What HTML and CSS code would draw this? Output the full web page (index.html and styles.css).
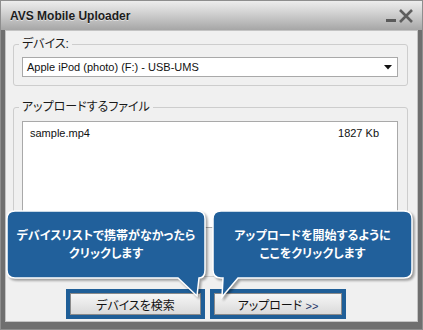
FILE: index.html
```html
<!DOCTYPE html>
<html>

<head>
    <title>AVS Mobile Uploader</title>
    <link rel="stylesheet" href="styles.css">
</head>

<body>
    <div class="window">
        <!-- Title bar -->
        <div class="titlebar">
            <span class="title">AVS Mobile Uploader</span>
            <div class="controls">
                <svg class="btn-min" width="12" height="16" viewBox="0 0 12 16">
                    <rect x="1" y="11" width="10" height="3" fill="#5a5a5a"/>
                </svg>
                <svg class="btn-close" width="16" height="16" viewBox="0 0 16 16">
                    <path d="M2 2 L14 14 M14 2 L2 14" stroke="#5e5e5e" stroke-width="2.6" fill="none"/>
                </svg>
            </div>
        </div>

        <div class="frame">
            <div class="content">
                <!-- Device group -->
                <fieldset class="group group-device">
                    <legend>デバイス:</legend>
                    <div class="combo">
                        <span>Apple iPod (photo) (F:) - USB-UMS</span>
                        <svg width="8" height="5" viewBox="0 0 8 5"><path d="M0 0 H8 L4 4.5 Z" fill="#111"/></svg>
                    </div>
                </fieldset>

                <!-- Files group -->
                <fieldset class="group group-files">
                    <legend>アップロードするファイル</legend>
                    <div class="filelist">
                        <div class="file-row">
                            <span>sample.mp4</span>
                            <span>1827 Kb</span>
                        </div>
                    </div>
                </fieldset>

                <!-- Buttons -->
                <div class="actions">
                    <div class="highlight highlight-search">
                        <button class="btn">デバイスを検索</button>
                    </div>
                    <div class="highlight highlight-upload">
                        <button class="btn">アップロード <span class="arrows">&gt;&gt;</span></button>
                    </div>
                </div>
            </div>
        </div>

        <!-- Tutorial callouts -->
        <div class="callout callout-left">
            <svg class="callout-shape" width="198" height="87" viewBox="0 0 198 87">
                <path d="M8 0 H190 Q198 0 198 8 V59 Q198 67 192 67 L190 85 L171 67 H8 Q0 67 0 59 V8 Q0 0 8 0 Z"/>
            </svg>
            <p class="callout-text">デバイスリストで携帯がなかったら<br>クリックします</p>
        </div>
        <div class="callout callout-right">
            <svg class="callout-shape" width="199" height="87" viewBox="0 0 199 87">
                <path d="M8 0 H191 Q199 0 199 8 V59 Q199 67 191 67 H25 L9 86 L10 67 H8 Q0 67 0 59 V8 Q0 0 8 0 Z"/>
            </svg>
            <p class="callout-text">アップロードを開始するように<br>ここをクリックします</p>
        </div>
    </div>
</body>

</html>
```

FILE: styles.css
```css
body {
    margin: 0;
    padding: 0;
    background-color: #ffffff;
    font-family: "Liberation Sans", "Noto Sans CJK JP", sans-serif;
    font-size: 11px;
    color: #111;
}

.window {
    position: relative;
    width: 421px;
    height: 328px;
    border: 1px solid #8e8e8e;
    background-color: #6f6f6f;
}

.titlebar {
    display: flex;
    justify-content: space-between;
    align-items: center;
    height: 29px;
    padding: 0 8px 0 9px;
    background: linear-gradient(#ededed, #cfcfcf 45%, #a6a6a6);
}

.title {
    font-size: 12px;
    font-weight: bold;
    color: #1c1c1c;
    text-shadow: 0 1px 0 rgba(255, 255, 255, 0.5);
    padding-top: 1px;
}

.controls {
    display: flex;
    align-items: center;
    gap: 1px;
}

.frame {
    padding: 0 4px 7px 4px;
}

.content {
    height: 290px;
    border: 1px solid #c4c4c4;
    background-color: #f0f0f0;
    display: flex;
    flex-direction: column;
}

.group {
    margin: 5px 9px 0 7px;
    padding: 5px 9px 8px 8px;
    border: 1px solid #cdcdcd;
    border-radius: 3px;
    min-width: 0;
}

.group legend {
    margin-left: -3px;
    padding: 0 3px;
    line-height: 16px;
    font-size: 12px;
    font-feature-settings: "palt";
    color: #1a1a1a;
}

.group-files {
    margin-top: 13px;
    padding-top: 6px;
    padding-bottom: 48px;
}

.combo {
    display: flex;
    justify-content: space-between;
    align-items: center;
    height: 18px;
    padding: 0 5px 0 4px;
    border: 1px solid #a9a9a9;
    background-color: #fff;
}

.filelist {
    height: 105px;
    border: 1px solid #a9a9a9;
    background-color: #fff;
}

.file-row {
    display: flex;
    justify-content: space-between;
    margin-top: 3px;
    padding: 0 18px 0 7px;
    line-height: 16px;
}

.actions {
    display: flex;
    gap: 5px;
    margin-top: 12px;
    padding-left: 60px;
}

.highlight {
    border: 4px solid #1f5e97;
    height: 22px;
}

.highlight-search {
    width: 131px;
}

.highlight-upload {
    width: 128px;
}

.btn {
    width: 100%;
    height: 22px;
    border: 1px solid #8a8a8a;
    background: linear-gradient(#f6f6f6, #e8e8e8 50%, #dadada);
    font-family: "Liberation Sans", "Noto Sans CJK JP", sans-serif;
    font-size: 12px;
    font-feature-settings: "palt";
    color: #111;
    padding: 0;
}

.arrows {
    color: #223366;
    font-size: 11px;
}

.callout {
    position: absolute;
    top: 210px;
    height: 67px;
}

.callout-left {
    left: 6px;
    width: 198px;
}

.callout-right {
    left: 212px;
    width: 199px;
}

.callout-shape {
    position: absolute;
    left: 0;
    top: 0;
    overflow: visible;
    filter: drop-shadow(2px 2px 1px rgba(0, 0, 0, 0.35));
}

.callout-shape path {
    fill: #21609b;
    stroke: #ffffff;
    stroke-width: 1.5;
}

.callout-text {
    position: relative;
    margin: 0;
    padding-top: 15px;
    text-align: center;
    color: #fff;
    font-family: "Noto Sans CJK JP", sans-serif;
    font-size: 12px;
    font-weight: bold;
    line-height: 18px;
    font-feature-settings: "palt";
}
```
